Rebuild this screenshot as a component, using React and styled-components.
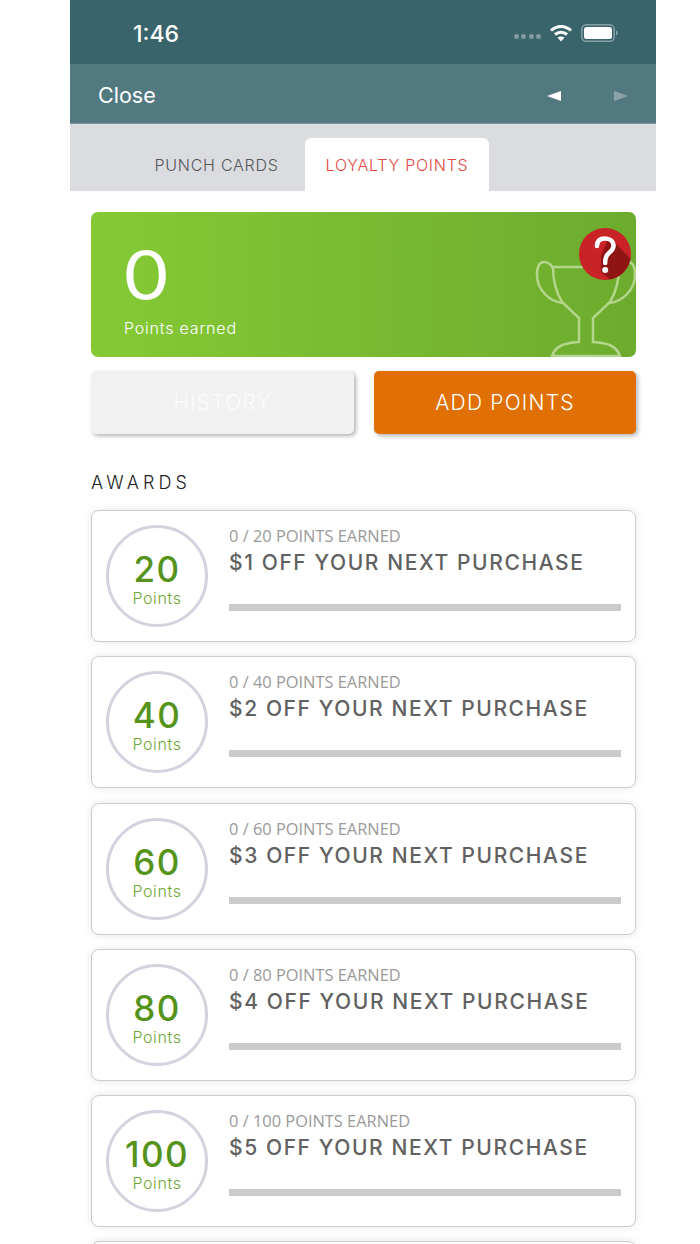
import React from 'react';
import styled, { createGlobalStyle } from 'styled-components';

const display = '"Inter", "Liberation Sans", sans-serif';
const body = '"Open Sans", "Liberation Sans", sans-serif';

const awards = [
  { points: 20, title: '$1 OFF YOUR NEXT PURCHASE' },
  { points: 40, title: '$2 OFF YOUR NEXT PURCHASE' },
  { points: 60, title: '$3 OFF YOUR NEXT PURCHASE' },
  { points: 80, title: '$4 OFF YOUR NEXT PURCHASE' },
  { points: 100, title: '$5 OFF YOUR NEXT PURCHASE' },
];

const GlobalStyle = createGlobalStyle`
  html, body {
    margin: 0;
    padding: 0;
    background: #fff;
    height: 1244px;
    overflow: hidden;
  }
  * { box-sizing: border-box; }
`;

const Phone = styled.div`
  width: 586px;
  height: 1244px;
  margin-left: 70px;
  overflow: hidden;
  font-family: ${display};
`;

const StatusBar = styled.div`
  height: 64px;
  background: #3a646b;
  display: flex;
  align-items: center;
  padding: 2px 38px 0 63px;
  color: #fff;
`;

const Clock = styled.div`
  flex: 1;
  font-size: 23px;
  font-weight: 500;
  padding-top: 1px;
`;

const SignalDots = styled.div`
  display: flex;
  gap: 2.5px;
  margin: 6px 8px 0 0;
`;

const SignalDot = styled.span`
  width: 5px;
  height: 5px;
  border-radius: 50%;
  background: #7f9ba0;
`;

const NavBar = styled.div`
  height: 60px;
  background: #527880;
  border-bottom: 1px solid #7a979c;
  display: flex;
  align-items: center;
  padding: 0 28px;
  color: #fff;
`;

const CloseLabel = styled.div`
  flex: 1;
  font-size: 21.5px;
  font-weight: 400;
  padding-top: 2px;
`;

const Arrow = styled.span`
  width: 0;
  height: 0;
  margin-top: 4px;
  border-top: 5px solid transparent;
  border-bottom: 5px solid transparent;
  ${p => (p.$left
    ? 'border-right: 14px solid #fff; margin-right: 53px;'
    : 'border-left: 14px solid #8ba3a8;')}
`;

const TabBar = styled.div`
  height: 67px;
  background: #dbdce0;
  display: flex;
  align-items: flex-end;
  padding-left: 58px;
`;

const Tab = styled.div`
  height: 53px;
  width: ${p => p.$width}px;
  display: flex;
  align-items: center;
  justify-content: center;
  border-radius: 6px 6px 0 0;
  font-size: 16px;
  font-weight: 300;
  letter-spacing: 0.75px;
  background: ${p => (p.$active ? '#fff' : 'transparent')};
  color: ${p => (p.$active ? '#e2483d' : '#55565a')};
`;

const Content = styled.div`
  padding: 21px 20px 0 21px;
`;

const ScoreCard = styled.div`
  position: relative;
  height: 145px;
  border-radius: 7px;
  background: linear-gradient(90deg, #85ca35 0%, #6dab2e 100%);
  color: #fff;
  padding: 27px 0 0 33px;
  overflow: hidden;
`;

const ScoreValue = styled.div`
  font-size: 66px;
  line-height: 72px;
  font-weight: 400;
  margin-left: -2px;
  transform: scaleX(1.16);
  transform-origin: left center;
`;

const ScoreLabel = styled.div`
  font-size: 16px;
  font-weight: 300;
  letter-spacing: 0.8px;
  margin-top: 7px;
`;

const Trophy = styled.svg`
  position: absolute;
  right: 0;
  bottom: 0;
  width: 106px;
  height: 102px;
`;

const HelpBadge = styled.svg`
  position: absolute;
  left: 488px;
  top: 16px;
  width: 52px;
  height: 52px;
`;

const ButtonRow = styled.div`
  display: grid;
  grid-template-columns: 263px 262px;
  gap: 20px;
  margin-top: 14px;
`;

const ActionButton = styled.div`
  height: 63px;
  border-radius: 5px;
  display: flex;
  align-items: center;
  justify-content: center;
  font-size: 21px;
  font-weight: 300;
  letter-spacing: 1.2px;
  box-shadow: 2px 2px 4px rgba(0, 0, 0, 0.3);
  background: ${p => (p.$primary ? '#e07004' : '#f1f1f1')};
  color: ${p => (p.$primary ? '#fff' : '#fbfbfb')};
`;

const SectionTitle = styled.div`
  margin-top: 37px;
  height: 23px;
  font-size: 18px;
  font-weight: 300;
  line-height: 23px;
  letter-spacing: 4.1px;
  color: #222;
`;

const AwardList = styled.div`
  display: flex;
  flex-direction: column;
  gap: 14.3px;
  margin-top: 16px;
`;

const AwardCard = styled.div`
  flex: none;
  height: 132px;
  display: flex;
  align-items: center;
  gap: 21px;
  padding: 0 14px;
  background: #fff;
  border: 1px solid #cdcdcd;
  border-radius: 8px;
  box-shadow: 0 0 8px rgba(0, 0, 0, 0.1);
`;

const PointsCircle = styled.div`
  flex: none;
  width: 102px;
  height: 102px;
  border: 3px solid #d3d3df;
  border-radius: 50%;
  display: flex;
  flex-direction: column;
  align-items: center;
  justify-content: center;
  padding-top: 7px;
`;

const PointsValue = styled.div`
  font-size: 35px;
  line-height: 36px;
  font-weight: 500;
  letter-spacing: 1.5px;
  color: #55931b;
`;

const PointsLabel = styled.div`
  font-size: 16px;
  font-weight: 300;
  line-height: 20px;
  letter-spacing: 0.6px;
  margin-top: 1px;
  color: #6fa834;
`;

const AwardBody = styled.div`
  flex: 1;
  align-self: stretch;
  display: flex;
  flex-direction: column;
  padding-top: 14px;
`;

const Earned = styled.div`
  font-family: ${body};
  font-size: 16.4px;
  line-height: 22px;
  color: #9a9a9a;
`;

const AwardTitle = styled.div`
  font-size: 21px;
  line-height: 30px;
  font-weight: 500;
  letter-spacing: 1.6px;
  margin-top: 1px;
  color: #616161;
  white-space: nowrap;
`;

const ProgressTrack = styled.div`
  height: 7px;
  margin-top: 26px;
  background: #cbcbcb;
`;

const Wifi = () => (
  <svg width="24" height="18" viewBox="0 0 24 18" fill="none" stroke="#fff" strokeWidth="3">
    <path d="M2 6.5C8 1 16 1 22 6.5" />
    <path d="M6 10.5C9.5 7.5 14.5 7.5 18 10.5" />
    <path d="M12 17.5L8.5 13.5C10.5 12 13.5 12 15.5 13.5Z" fill="#fff" stroke="none" />
  </svg>
);

const Battery = () => (
  <svg width="37" height="18" viewBox="0 0 37 18" style={{ marginLeft: 8 }}>
    <rect x="0.75" y="0.75" width="32.5" height="16.5" rx="4.5" fill="none" stroke="#86a0a5" strokeWidth="1.5" />
    <rect x="3" y="3" width="28" height="12" rx="2.5" fill="#fff" />
    <path d="M35 6.5C36.2 7 36.8 8 36.8 9C36.8 10 36.2 11 35 11.5Z" fill="#86a0a5" />
  </svg>
);

const App = () => (
  <Phone>
    <GlobalStyle />
    <StatusBar>
      <Clock>1:46</Clock>
      <SignalDots>
        {[0, 1, 2, 3].map(i => <SignalDot key={i} />)}
      </SignalDots>
      <Wifi />
      <Battery />
    </StatusBar>
    <NavBar>
      <CloseLabel>Close</CloseLabel>
      <Arrow $left />
      <Arrow />
    </NavBar>
    <TabBar>
      <Tab $width={177}>PUNCH CARDS</Tab>
      <Tab $width={184} $active>LOYALTY POINTS</Tab>
    </TabBar>
    <Content>
      <ScoreCard>
        <ScoreValue>0</ScoreValue>
        <ScoreLabel>Points earned</ScoreLabel>
        <Trophy viewBox="530 255 106 102" fill="none" stroke="#b4d68c" strokeWidth="2.5">
          <path d="M553 267H619C619 280 616 292 610 302L593 318V342C607 343 616 345 620 356H552C556 345 565 343 579 342V318L562 302C556 292 553 280 553 267Z" />
          <path d="M553 268C550 263 547 262 544 262C539 262 537 268 537 275C537 290 550 302 563 303" />
          <path d="M619 268C622 263 625 262 628 262C633 262 635 268 635 275C635 290 622 302 609 303" />
        </Trophy>
        <HelpBadge viewBox="0 0 52 52">
          <defs>
            <clipPath id="badge-clip">
              <circle cx="26" cy="26" r="26" />
            </clipPath>
          </defs>
          <circle cx="26" cy="26" r="26" fill="#c92227" />
          <path d="M30 9L62 41V62H44L22 44V28Z" fill="#8f1414" clipPath="url(#badge-clip)" />
          <path d="M18 18C18 13 21 10.5 26 10.5C31 10.5 34.5 13.5 34.5 18C34.5 23 29.5 24 27.5 28C26.5 30 26.2 32 26.2 35" fill="none" stroke="#fff" strokeWidth="4.5" strokeLinecap="round" />
          <circle cx="26.2" cy="42" r="3" fill="#fff" />
        </HelpBadge>
      </ScoreCard>
      <ButtonRow>
        <ActionButton>HISTORY</ActionButton>
        <ActionButton $primary>ADD POINTS</ActionButton>
      </ButtonRow>
      <SectionTitle>AWARDS</SectionTitle>
      <AwardList>
        {awards.map(a => (
          <AwardCard key={a.points}>
            <PointsCircle>
              <PointsValue>{a.points}</PointsValue>
              <PointsLabel>Points</PointsLabel>
            </PointsCircle>
            <AwardBody>
              <Earned>0 / {a.points} POINTS EARNED</Earned>
              <AwardTitle>{a.title}</AwardTitle>
              <ProgressTrack />
            </AwardBody>
          </AwardCard>
        ))}
        <AwardCard />
      </AwardList>
    </Content>
  </Phone>
);

export default App;
